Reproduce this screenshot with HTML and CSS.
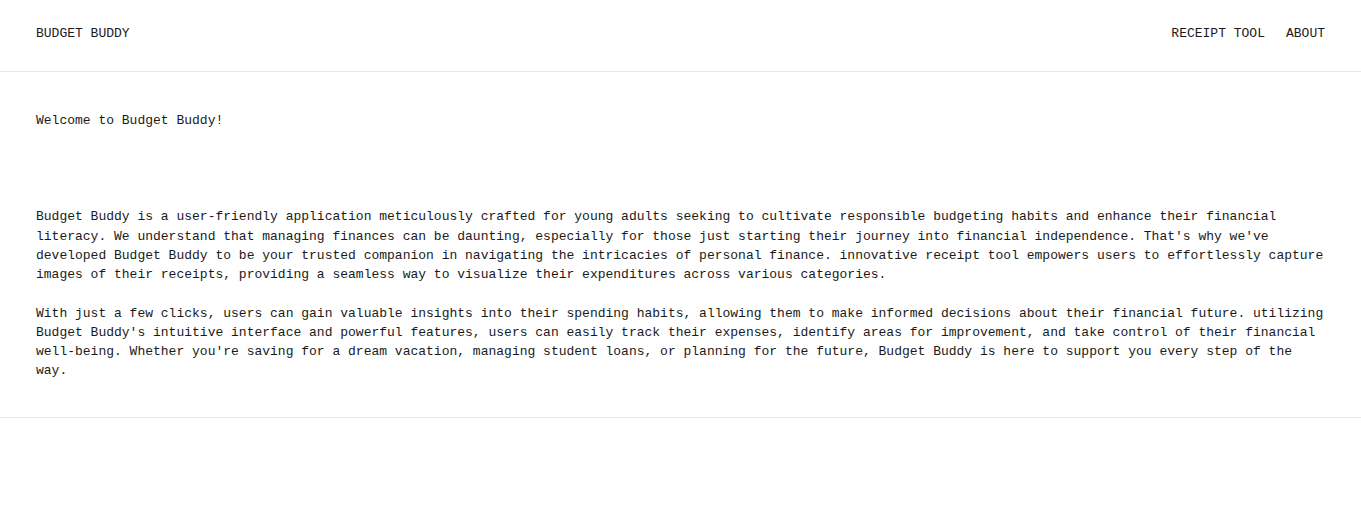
FILE: index.html
```html
<!DOCTYPE html>
<html lang="en">
<head>
<meta charset="utf-8">
<title>Budget Buddy</title>
<link rel="stylesheet" href="styles.css">
</head>
<body>
<header class="site-header">
  <a class="brand" href="#">BUDGET BUDDY</a>
  <nav class="nav">
    <a class="nav-link" href="#">RECEIPT TOOL</a>
    <a class="nav-link" href="#">ABOUT</a>
  </nav>
</header>
<main class="content">
  <h1 class="welcome">Welcome to Budget Buddy!</h1>
  <p class="about">Budget Buddy is a user-friendly application meticulously crafted for young adults seeking to cultivate responsible budgeting habits and enhance their financial literacy. We understand that managing finances can be daunting, especially for those just starting their journey into financial independence. That's why we've developed Budget Buddy to be your trusted companion in navigating the intricacies of personal finance. innovative receipt tool empowers users to effortlessly capture images of their receipts, providing a seamless way to visualize their expenditures across various categories.</p>
  <p class="about">With just a few clicks, users can gain valuable insights into their spending habits, allowing them to make informed decisions about their financial future. utilizing Budget Buddy's intuitive interface and powerful features, users can easily track their expenses, identify areas for improvement, and take control of their financial well-being. Whether you're saving for a dream vacation, managing student loans, or planning for the future, Budget Buddy is here to support you every step of the way.</p>
</main>
<footer class="site-footer"></footer>
</body>
</html>
```
FILE: styles.css
```css
* { box-sizing: border-box; }
html, body { margin: 0; padding: 0; background: #fff; }
body {
  font-family: "Liberation Mono", "DejaVu Sans Mono", monospace;
  font-size: 13px;
  line-height: 19.25px;
  color: #1a1a1a;
}
a { color: inherit; text-decoration: none; }
.site-header {
  height: 72px;
  padding: 0 36px 4px;
  display: flex;
  align-items: center;
  justify-content: space-between;
  border-bottom: 1px solid #e6e6e6;
}
.brand { font-size: 13px; }
.nav { display: flex; gap: 21px; }
.content {
  padding: 39px 36px 36px;
}
.welcome {
  margin: 0 0 77px;
  font-size: 13px;
  font-weight: normal;
  line-height: 19.25px;
}
.about { margin: 0 0 19.25px; }
.about:last-child { margin-bottom: 0; }
.site-footer {
  border-top: 1px solid #e6e6e6;
  height: 105px;
}
```
